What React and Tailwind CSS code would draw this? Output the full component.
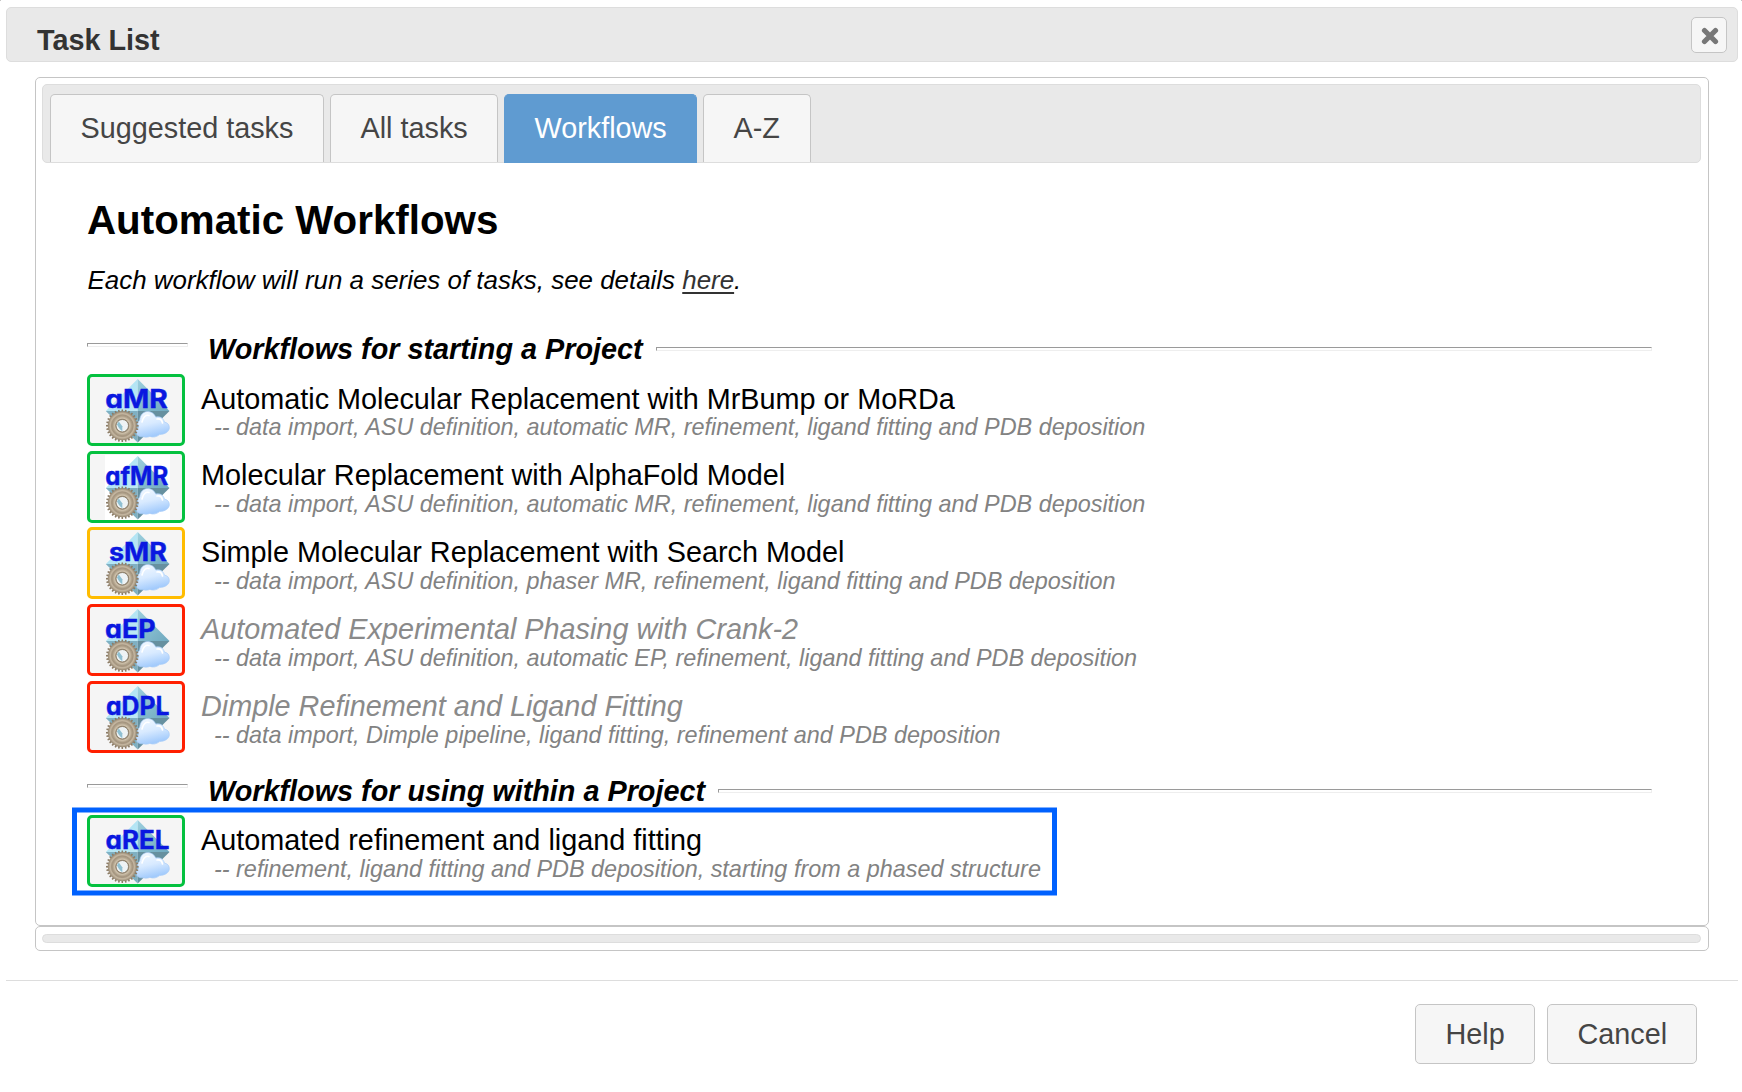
const TEETH = Array.from({ length: 28 }, (_, i) => (i * 360) / 28);

const STARTING = [
  {
    code: "aMR", x: 15.3, width: 62.5, tone: "green",
    title: "Automatic Molecular Replacement with MrBump or MoRDa",
    steps: "-- data import, ASU definition, automatic MR, refinement, ligand fitting and PDB deposition",
  },
  {
    code: "afMR", x: 15.3, width: 63, tone: "green", plate: true,
    title: "Molecular Replacement with AlphaFold Model",
    steps: "-- data import, ASU definition, automatic MR, refinement, ligand fitting and PDB deposition",
  },
  {
    code: "sMR", x: 19, width: 58, tone: "amber",
    title: "Simple Molecular Replacement with Search Model",
    steps: "-- data import, ASU definition, phaser MR, refinement, ligand fitting and PDB deposition",
  },
  {
    code: "aEP", x: 15, width: 50.5, tone: "red", disabled: true,
    title: "Automated Experimental Phasing with Crank-2",
    steps: "-- data import, ASU definition, automatic EP, refinement, ligand fitting and PDB deposition",
  },
  {
    code: "aDPL", x: 16, width: 63.5, tone: "red", disabled: true,
    title: "Dimple Refinement and Ligand Fitting",
    steps: "-- data import, Dimple pipeline, ligand fitting, refinement and PDB deposition",
  },
];

const WITHIN = {
  code: "aREL", x: 15.5, width: 64, tone: "green",
  title: "Automated refinement and ligand fitting",
  steps: "-- refinement, ligand fitting and PDB deposition, starting from a phased structure",
};

const TONES = {
  green: "border-[#04c13f]",
  amber: "border-[#ffbc00]",
  red: "border-[#ff1f00]",
};

function WorkflowIcon({ item }) {
  const id = item.code;
  return (
    <div className={`h-[72px] w-[98px] shrink-0 rounded-[5px] border-[3px] bg-[#f5f5f5] ${TONES[item.tone]}`}>
      <svg width="92" height="66" viewBox="0 0 92 66" className="block">
        <defs>
          <linearGradient id={`${id}-tl`} x1="0" y1="0" x2="1" y2="1">
            <stop offset="0" stopColor="#a6e0f2" />
            <stop offset="1" stopColor="#bfe9f6" />
          </linearGradient>
          <linearGradient id={`${id}-tr`} x1="0" y1="0" x2="1" y2="1">
            <stop offset="0" stopColor="#9ccfdd" />
            <stop offset="1" stopColor="#6fa9bf" />
          </linearGradient>
          <radialGradient id={`${id}-gear`} gradientUnits="userSpaceOnUse" cx="0" cy="0" r="14.4">
            <stop offset="0.42" stopColor="#85755f" />
            <stop offset="0.52" stopColor="#cfc2ac" />
            <stop offset="0.68" stopColor="#a99a83" />
            <stop offset="0.84" stopColor="#c4b6a0" />
            <stop offset="1" stopColor="#978872" />
          </radialGradient>
          <linearGradient id={`${id}-cloud`} x1="0" y1="0" x2="0.3" y2="1">
            <stop offset="0" stopColor="#f4faff" />
            <stop offset="0.55" stopColor="#d8eaff" />
            <stop offset="1" stopColor="#a3cbfc" />
          </linearGradient>
        </defs>
        {item.plate && <rect x="15" y="1" width="65" height="65" fill="#ffffff" />}
        <path d="M47.7 2L15.8 34H47.7Z" fill={`url(#${id}-tl)`} />
        <path d="M47.7 2L79.5 34H47.7Z" fill={`url(#${id}-tr)`} />
        <path d="M15.8 34H47.7V65.5Z" fill="#7fb0c2" />
        <path d="M79.5 34H47.7V65.5Z" fill="#66909f" />
        <text
          x={item.x}
          y="31"
          textLength={item.width}
          lengthAdjust="spacingAndGlyphs"
          fill="#0a18e0"
          stroke="#0a18e0"
          strokeWidth="0.4"
          className="font-['Inter',sans-serif] text-[25px] font-bold [font-feature-settings:'cv11']"
        >
          {item.code}
        </text>
        <path
          d="M53 59.8c-4 .3-6.800-1.700-6.800-4.800 0-2.500 1-4 2.600-5-1.800-2.500-1.300-5.500 1-7 .2-4.800 3.500-8.500 7.800-8.500 3.800 0 6.900 2.300 8.200 5.600 4.600-1 7.800 1.200 8.600 5 3.400.6 5.100 2.900 4.900 5.900-.3 3.600-3.800 6.200-9.800 6.600-3 2.600-6.800 3-9.600 1.800-2.300.9-4.800.9-6.900.4Z"
          fill={`url(#${id}-cloud)`}
          stroke="#a9cdf8"
          strokeWidth="0.7"
        />
        <path d="M52 45c1-5 4-7.500 7-6.500M67 42c3-.5 5 1 5.500 4" fill="none" stroke="#ffffff" strokeWidth="1.600" strokeLinecap="round" />
        <g transform="translate(32.300 48.700)">
          {TEETH.map((angle) => (
            <path key={angle} d="M-1.100-13L-.7-16.300H.7L1.100-13Z" fill="#8c7c66" transform={`rotate(${angle})`} />
          ))}
          <circle r="10.200" fill="none" stroke={`url(#${id}-gear)`} strokeWidth="8.400" />
          <circle r="10.800" fill="none" stroke="#948570" strokeWidth="0.500" />
          <circle r="6.200" fill="#eef3f5" stroke="#85765f" strokeWidth="0.800" />
          <path d="M-3.500-4.300L0 .5V5.500C-2.500 3.500-4.500 1-5.300-1.500Z" fill="#8fc0d2" />
        </g>
      </svg>
    </div>
  );
}

function WorkflowRow({ item }) {
  const titleTone = item.disabled ? "italic text-[#8a8a8a]" : "text-black";
  return (
    <div className="flex h-[76.8px] items-start">
      <WorkflowIcon item={item} />
      <div className="ml-4 whitespace-nowrap pt-[9.8px]">
        <div className={`text-[28.8px] leading-[30px] ${titleTone}`}>{item.title}</div>
        <div className="mt-[0.8px] pl-[13px] text-[23.4px] italic leading-[26px] text-[#828282]">{item.steps}</div>
      </div>
    </div>
  );
}

function Rule({ className }) {
  return (
    <div className={`h-1 border border-b-[#eeeeee] border-l-[#9a9a9a] border-r-[#eeeeee] border-t-[#9a9a9a] ${className}`} />
  );
}

function SectionHeading({ children, ruleOffset, className }) {
  return (
    <div className={`flex h-[34px] items-start ${className}`}>
      <Rule className={`w-[101px] shrink-0 ${ruleOffset}`} />
      <h2 className="ml-[20px] mr-[13px] whitespace-nowrap text-[28.8px] font-bold italic leading-[34px] text-black">
        {children}
      </h2>
      <Rule className="mt-[15px] flex-1" />
    </div>
  );
}

function Tab({ children, active, className }) {
  const tone = active
    ? "border-[#5f9bd1] bg-[#5f9bd1] text-white"
    : "border-[#c5c5c5] bg-[#f6f6f6] text-[#454545]";
  const height = active ? "h-[69px]" : "h-[68px]";
  return (
    <button
      type="button"
      className={`flex items-start rounded-t-[5px] border border-b-0 pl-[29.5px] pt-4 text-[28.8px] leading-[34px] ${height} ${tone} ${className}`}
    >
      {children}
    </button>
  );
}

function DialogButton({ children, className }) {
  return (
    <button
      type="button"
      className={`h-[60px] rounded-[5px] border border-[#c5c5c5] bg-[#f6f6f6] pb-3 pl-[29.5px] pt-3 text-left text-[28.8px] leading-[34px] text-[#454545] ${className}`}
    >
      {children}
    </button>
  );
}

export default function App() {
  return (
    <div className="relative flex h-[1092px] w-[1742px] flex-col overflow-hidden bg-white px-[6px] pr-1 pt-[7px] font-['Liberation_Sans',Arial,sans-serif]">
      <span className="absolute left-0 top-0 size-px bg-[#c5c5c5]" />
      <span className="absolute right-0 top-0 size-px bg-[#c5c5c5]" />

      <header className="flex h-[55px] items-start justify-between rounded-[5px] border border-[#dddddd] bg-[#e9e9e9] pl-[30px] pr-2.5">
        <h1 className="pt-[15px] text-[28.8px] font-bold leading-[34px] text-[#333333]">Task List</h1>
        <button
          type="button"
          aria-label="Close"
          className="mt-[9px] flex size-9 items-center justify-center rounded-[5px] border border-[#c5c5c5] bg-[#f6f6f6]"
        >
          <svg width="18" height="18" viewBox="0 0 18 18" className="ml-0.5 mt-px">
            <path d="M3.500 3.500L14.500 14.500M14.500 3.500L3.500 14.500" stroke="#777777" strokeWidth="5.200" strokeLinecap="round" />
          </svg>
        </button>
      </header>

      <main className="ml-[29px] mr-[29px] mt-[15px]">
        <section className="h-[849px] rounded-[5px] border border-[#c5c5c5] px-[6px] pr-[7px] pt-[6px]">
          <nav className="flex h-[79px] items-start gap-[6px] rounded-[5px] border border-[#dddddd] bg-[#e9e9e9] pl-[7px] pt-[9px]">
            <Tab className="w-[274px]">Suggested tasks</Tab>
            <Tab className="w-[168px]">All tasks</Tab>
            <Tab active className="w-[193px]">Workflows</Tab>
            <Tab className="w-[108px]">A-Z</Tab>
          </nav>

          <div className="ml-[45px] mr-[49px] pt-[34px]">
            <h2 className="text-[40.32px] font-bold leading-[46px] text-black">Automatic Workflows</h2>
            <p className="mt-[22px] pl-[0.6px] text-[25.92px] italic leading-[30px] text-black">
              Each workflow will run a series of tasks, see details{" "}
              <a className="text-[#333333] underline decoration-2 underline-offset-[3px]">here</a>.
            </p>

            <SectionHeading className="mt-[37px]" ruleOffset="mt-[11px]">
              Workflows for starting a Project
            </SectionHeading>
            <div className="mt-[7.8px]">
              {STARTING.map((item) => (
                <WorkflowRow key={item.code} item={item} />
              ))}
            </div>

            <SectionHeading className="mt-[16.2px]" ruleOffset="mt-[10px]">
              Workflows for using within a Project
            </SectionHeading>
            <div className="-ml-[15px] h-[87px] w-[985px] border-x-[5px] border-y-4 border-[#0061fe] pl-2.5 pt-[3px] shadow-[0_1px_0_#80b0ff,0_-1px_0_#80b0ff,inset_0_1px_0_#80b0ff,inset_0_-1px_0_#80b0ff]">
              <WorkflowRow item={WITHIN} />
            </div>
          </div>
        </section>

        <section className="h-[25px] rounded-[5px] border border-[#c5c5c5] px-[6px] pr-[7px] pt-[7px]">
          <div className="h-[9px] rounded-[5px] border border-[#dddddd] bg-[#e9e9e9]" />
        </section>
      </main>

      <footer className="mt-[29px] flex justify-end gap-3 border-t border-[#dddddd] pr-[41px] pt-[23px]">
        <DialogButton className="w-[120px]">Help</DialogButton>
        <DialogButton className="w-[150px]">Cancel</DialogButton>
      </footer>
    </div>
  );
}
